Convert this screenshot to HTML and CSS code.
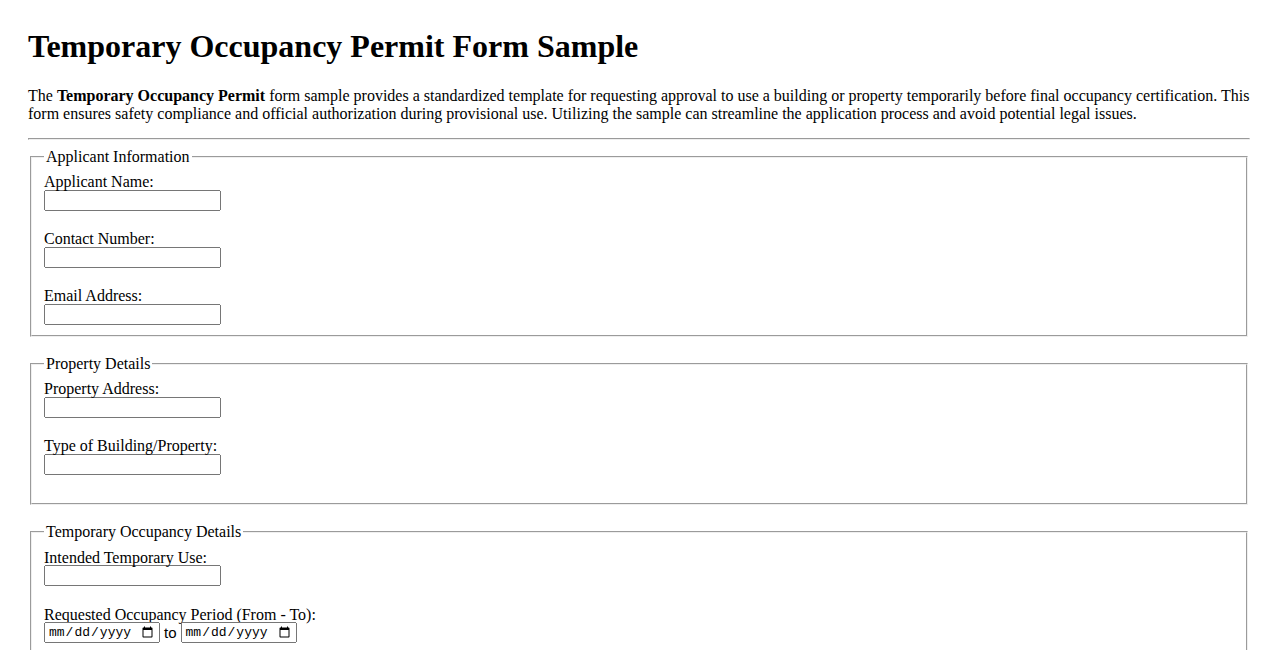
FILE: index.html
```html
<!DOCTYPE html>
<html lang="en">
<head>
<meta charset="utf-8">
<title>Temporary Occupancy Permit Form Sample</title>
<link rel="stylesheet" href="styles.css">
</head>
<body>
<h1 class="title">Temporary Occupancy Permit Form Sample</h1>
<p class="intro">The <strong>Temporary Occupancy Permit</strong> form sample provides a standardized template for requesting approval to use a building or property temporarily before final occupancy certification. This form ensures safety compliance and official authorization during provisional use. Utilizing the sample can streamline the application process and avoid potential legal issues.</p>
<hr class="divider">
<form class="permit-form">
  <fieldset class="section">
    <legend class="section-legend">Applicant Information</legend>
    <div class="field">
      <label class="field-label" for="name">Applicant Name:</label>
      <input class="text-input" type="text" id="name">
    </div>
    <div class="field">
      <label class="field-label" for="phone">Contact Number:</label>
      <input class="text-input" type="tel" id="phone">
    </div>
    <div class="field field-end">
      <label class="field-label" for="email">Email Address:</label>
      <input class="text-input" type="email" id="email">
    </div>
  </fieldset>

  <fieldset class="section section-loose">
    <legend class="section-legend">Property Details</legend>
    <div class="field">
      <label class="field-label" for="address">Property Address:</label>
      <input class="text-input" type="text" id="address">
    </div>
    <div class="field">
      <label class="field-label" for="type">Type of Building/Property:</label>
      <input class="text-input" type="text" id="type">
    </div>
  </fieldset>

  <fieldset class="section">
    <legend class="section-legend">Temporary Occupancy Details</legend>
    <div class="field">
      <label class="field-label" for="use">Intended Temporary Use:</label>
      <input class="text-input" type="text" id="use">
    </div>
    <div class="field">
      <label class="field-label" for="from">Requested Occupancy Period (From - To):</label>
      <div class="date-row"><input class="date-input" type="date" id="from"><span class="date-sep">to</span><input class="date-input" type="date" id="to"></div>
    </div>
    <div class="field field-end">
      <label class="field-label" for="reason">Reason for Temporary Occupancy:</label>
      <input class="text-input" type="text" id="reason">
    </div>
  </fieldset>

  <fieldset class="section">
    <legend class="section-legend">Declaration</legend>
    <div class="field field-end">
      <label class="field-label" for="sig">Applicant Signature:</label>
      <input class="text-input" type="text" id="sig">
    </div>
  </fieldset>
</form>
</body>
</html>
```
FILE: styles.css
```css
html {
  background: #ffffff;
}

body {
  margin: 0;
  padding: 6px 28px 20px;
  font-family: "Liberation Serif", "Times New Roman", serif;
  font-size: 16px;
  color: #000000;
}

.title {
  font-size: 32px;
  font-weight: bold;
  margin: 22.44px 0 21.44px;
}

.intro {
  margin: 16px 0 15px;
}

.divider {
  margin: 8px 0;
}

.permit-form {
  margin: 0;
}

.section {
  margin: 0 2px 18px;
  padding: 5.6px 12px 10px;
}

.section-loose {
  padding-bottom: 11px;
}

.section-legend {
  padding: 0 2px;
}

.field {
  margin-bottom: 17.6px;
}

.field-end {
  margin-bottom: 0;
}

.field-label {
  display: block;
  line-height: 14.4px;
  padding-top: 4px;
}

.text-input {
  display: block;
  box-sizing: border-box;
  width: 177px;
  height: 21px;
  margin: 0;
}

.date-row {
  display: flex;
  align-items: center;
  height: 21px;
}

.date-input {
  box-sizing: border-box;
  width: 116px;
  height: 21px;
  margin: 0;
  padding: 0 2px;
  font-family: "Liberation Mono", monospace;
  font-size: 13px;
}

.date-sep {
  font-family: "Liberation Sans", Arial, sans-serif;
  font-size: 15px;
  padding: 0 4px;
}
```
